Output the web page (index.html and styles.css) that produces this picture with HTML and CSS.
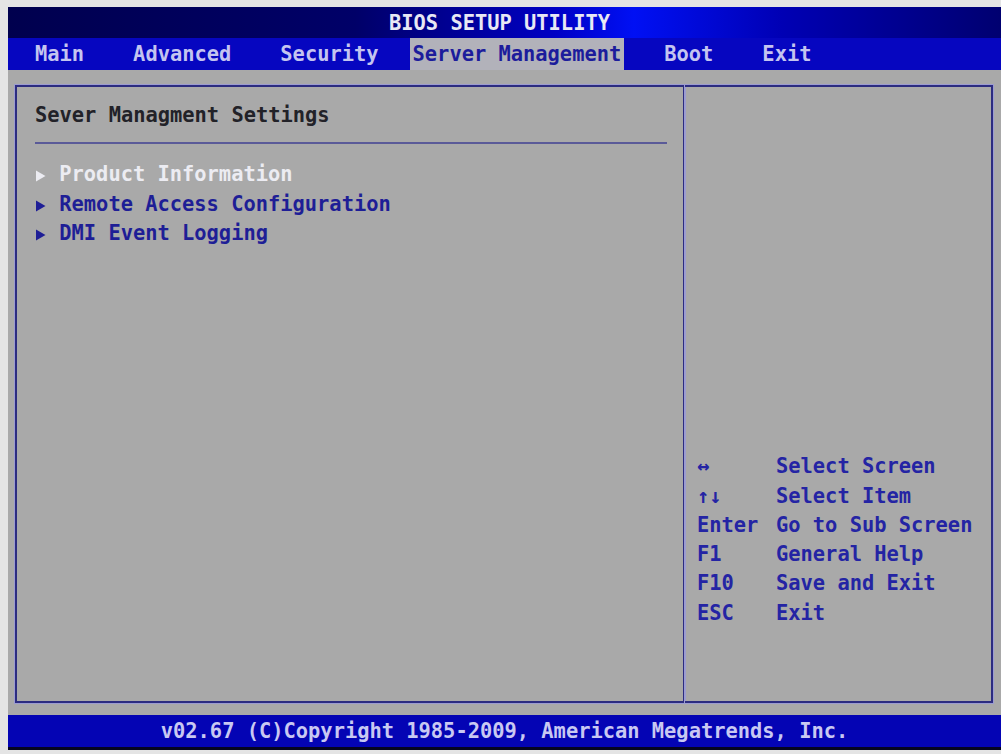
FILE: index.html
```html
<!DOCTYPE html>
<html lang="en">
<head>
  <meta charset="UTF-8">
  <meta name="viewport" content="width=device-width, initial-scale=1.0">
  <title>BIOS Setup Utility</title>
  <link rel="stylesheet" href="styles.css">
</head>
<body>
  <div class="screen">
    <div class="titlebar">BIOS SETUP UTILITY</div>
    <nav class="menubar">
      <span class="tab">Main</span>
      <span class="tab">Advanced</span>
      <span class="tab">Security</span>
      <span class="tab active">Server Management</span>
      <span class="tab">Boot</span>
      <span class="tab">Exit</span>
    </nav>
    <div class="content">
      <div class="panel main-panel">
        <div class="heading">Sever Managment Settings</div>
        <hr class="rule">
        <ul class="items">
          <li class="item selected"><span class="arrow"><svg viewBox="0 0 12 12" width="12" height="12"><polygon points="1,0.5 10.5,6 1,11.5" fill="currentColor"/></svg></span> Product Information</li>
          <li class="item"><span class="arrow"><svg viewBox="0 0 12 12" width="12" height="12"><polygon points="1,0.5 10.5,6 1,11.5" fill="currentColor"/></svg></span> Remote Access Configuration</li>
          <li class="item"><span class="arrow"><svg viewBox="0 0 12 12" width="12" height="12"><polygon points="1,0.5 10.5,6 1,11.5" fill="currentColor"/></svg></span> DMI Event Logging</li>
        </ul>
      </div>
      <div class="panel help-panel">
        <table class="keys">
          <tr><td class="key">↔</td><td>Select Screen</td></tr>
          <tr><td class="key">↑↓</td><td>Select Item</td></tr>
          <tr><td class="key">Enter</td><td>Go to Sub Screen</td></tr>
          <tr><td class="key">F1</td><td>General Help</td></tr>
          <tr><td class="key">F10</td><td>Save and Exit</td></tr>
          <tr><td class="key">ESC</td><td>Exit</td></tr>
        </table>
      </div>
    </div>
    <div class="footer">v02.67 (C)Copyright 1985-2009, American Megatrends, Inc.</div>
  </div>
</body>
</html>
```

FILE: styles.css
```css
* {
  box-sizing: border-box;
}
body {
  margin: 0;
  padding: 0;
  background: #e4e4e4;
  font-family: "DejaVu Sans Mono", "Liberation Mono", monospace;
  font-weight: bold;
  font-size: 20.4px;
}
.screen {
  margin: 7px 0 0 8px;
  height: 743px;
  display: flex;
  flex-direction: column;
  background: #a9a9a9;
}
.titlebar {
  height: 31px;
  line-height: 33px;
  text-align: center;
  color: #e8e8f4;
  padding-right: 10px;
  background: linear-gradient(to right, #00004e 0%, #000068 35%, #0000c4 55%, #0010f4 63%, #0000b4 78%, #000070 100%);
}
.menubar {
  height: 32px;
  display: flex;
  align-items: center;
  gap: 43px;
  padding-left: 24px;
  background: #0606c0;
}
.tab {
  height: 32px;
  line-height: 32px;
  padding: 0 3px;
  color: #c4c4f0;
}
.tab.active {
  margin-left: -15px;
  margin-right: -6px;
  background: #b2b2ba;
  color: #1c1c9c;
}
.content {
  flex: 1;
  display: flex;
  padding: 15px 8px 12px 7px;
}
.panel {
  border: 2px solid #2c2c80;
  box-shadow: 0 0 0 1px #9c9cd0;
}
.main-panel {
  width: 670px;
  padding: 6px 16px 0 18px;
}
.help-panel {
  flex: 1;
  border-left: none;
  display: flex;
  flex-direction: column;
  justify-content: flex-end;
  padding: 0 0 73px 12px;
}
.heading {
  height: 44px;
  line-height: 44px;
  color: #222228;
}
.rule {
  margin: 5px 0 16px;
  border: none;
  border-top: 2px solid #5a5a98;
}
.items {
  list-style: none;
  margin: 0;
  padding: 0;
}
.item {
  height: 29.5px;
  line-height: 29.5px;
  color: #1e1e96;
  white-space: pre;
}
.item.selected {
  color: #ececf2;
}
.arrow {
  display: inline-block;
  width: 12px;
  text-align: center;
}
.arrow svg {
  display: inline-block;
  vertical-align: -1px;
}
.keys {
  border-collapse: collapse;
  color: #2424a4;
  white-space: nowrap;
}
.keys td {
  padding: 0;
  height: 29.3px;
  line-height: 29.3px;
}
.keys .key {
  width: 79px;
}
.footer {
  height: 35px;
  line-height: 32px;
  text-align: center;
  color: #c8c8f2;
  background: #0404b4;
  border-bottom: 3px solid #050520;
}
```
